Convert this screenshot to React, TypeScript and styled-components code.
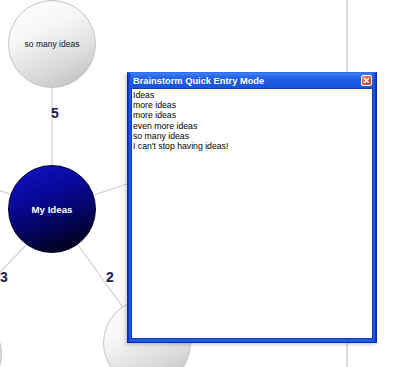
import React from "react";
import styled, { createGlobalStyle } from "styled-components";

const GlobalStyle = createGlobalStyle`
  html, body {
    margin: 0;
    padding: 0;
    background: #ffffff;
    font-family: "Liberation Sans", Arial, sans-serif;
  }
`;

// Page: drawing canvas on the left, side panel behind the divider line
const Page = styled.div`
  position: relative;
  width: 400px;
  height: 367px;
  display: flex;
  overflow: hidden;
  background: #ffffff;
`;

const Canvas = styled.div`
  position: relative;
  flex: 0 0 346px;
  height: 100%;
  overflow: hidden;
`;

const SidePanel = styled.div`
  flex: 1;
  border-left: 2px solid #dcdcdc;
`;

const Edges = styled.svg`
  position: absolute;
  left: 0;
  top: 0;
`;

const Node = styled.div<{ $dark?: boolean }>`
  position: absolute;
  width: 88px;
  height: 88px;
  border-radius: 50%;
  box-sizing: border-box;
  display: flex;
  align-items: center;
  justify-content: center;
  text-align: center;
  border: 1px solid ${(p) => (p.$dark ? "#000030" : "#c4c4c4")};
  background: ${(p) =>
    p.$dark
      ? "linear-gradient(160deg, #1212c8 0%, #08089a 35%, #03034e 70%, #000000 100%)"
      : "linear-gradient(155deg, #ffffff 0%, #f6f6f6 35%, #dadada 70%, #b8b8b8 100%)"};
  color: ${(p) => (p.$dark ? "#ffffff" : "#111111")};
  font-size: ${(p) => (p.$dark ? "9.7px" : "8.5px")};
  font-weight: ${(p) => (p.$dark ? "bold" : "normal")};
`;

const EdgeLabel = styled.div`
  position: absolute;
  transform: translate(-50%, -50%);
  font-size: 14px;
  font-weight: bold;
  color: #1b1b4e;
  line-height: 1;
`;

// Quick entry window, floating over the diagram
const Window = styled.div`
  position: absolute;
  left: 127px;
  top: 72px;
  width: 250px;
  height: 271px;
  box-sizing: border-box;
  display: flex;
  flex-direction: column;
  background: linear-gradient(to right, #0a2fc0 0px, #1d5ae6 2px, #1d5ae6 calc(100% - 2px), #0a2fc0 100%);
  border: 1px solid #0a2aa8;
  border-top-color: #2f6cf0;
  padding: 0 3px 3px;
  box-shadow: -2px 2px 3px rgba(0, 0, 0, 0.18);
`;

const TitleBar = styled.div`
  height: 15px;
  display: flex;
  align-items: center;
  justify-content: space-between;
  padding: 0 1px 0 2px;
  background: linear-gradient(to bottom, #3d7ef2 0%, #1f5ee4 40%, #1a55dc 100%);
`;

const Title = styled.span`
  color: #ffffff;
  font-size: 9.3px;
  font-weight: bold;
  white-space: nowrap;
`;

const CloseButton = styled.div`
  width: 11px;
  height: 11px;
  box-sizing: border-box;
  border: 1px solid #ffffff;
  border-radius: 2px;
  background: linear-gradient(135deg, #f08a68 0%, #e0502a 60%, #c83818 100%);
  display: flex;
  align-items: center;
  justify-content: center;
`;

const EntryArea = styled.div`
  flex: 1;
  background: #ffffff;
  border: 1px solid #103ab8;
  padding: 1px 1px 0 1px;
  font-size: 8.7px;
  line-height: 10.2px;
  color: #000000;
  overflow: hidden;
`;

const EntryLine = styled.div`
  white-space: nowrap;
`;

const entries = [
  "Ideas",
  "more ideas",
  "more ideas",
  "even more ideas",
  "so many ideas",
  "I can't stop having ideas!",
];

const App = () => {
  return (
    <>
      <GlobalStyle />
      <Page>
        <Canvas>
          <Edges width="346" height="367">
            <g stroke="#cfcfcf" strokeWidth="1.2" fill="none">
              <line x1="52" y1="44" x2="52" y2="209" />
              <line x1="52" y1="209" x2="-10" y2="187" />
              <line x1="52" y1="209" x2="160" y2="173" />
              <line x1="52" y1="218" x2="-20" y2="293" />
              <line x1="52" y1="209" x2="148" y2="342" />
            </g>
          </Edges>

          <Node style={{ left: 8, top: 0 }}>so many ideas</Node>
          <Node $dark style={{ left: 8, top: 165 }}>
            My Ideas
          </Node>
          <Node style={{ left: 103, top: 299 }} />
          <Node style={{ left: -86, top: 310 }} />

          <EdgeLabel style={{ left: 55, top: 113 }}>5</EdgeLabel>
          <EdgeLabel style={{ left: 4, top: 277 }}>3</EdgeLabel>
          <EdgeLabel style={{ left: 110, top: 277 }}>2</EdgeLabel>
        </Canvas>
        <SidePanel />

        <Window>
          <TitleBar>
            <Title>Brainstorm Quick Entry Mode</Title>
            <CloseButton>
              <svg width="7" height="7" viewBox="0 0 7 7">
                <path d="M1 1 L6 6 M6 1 L1 6" stroke="#ffffff" strokeWidth="1.6" />
              </svg>
            </CloseButton>
          </TitleBar>
          <EntryArea>
            {entries.map((line, i) => (
              <EntryLine key={i}>{line}</EntryLine>
            ))}
          </EntryArea>
        </Window>
      </Page>
    </>
  );
};

export default App;
